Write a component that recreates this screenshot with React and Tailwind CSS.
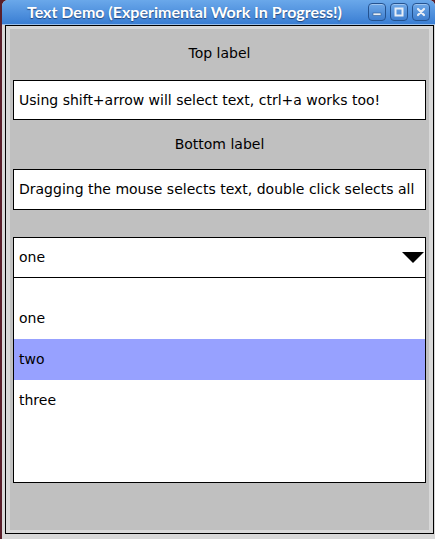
const items = ["one", "two", "three"];

function TitleButton({ kind }) {
  return (
    <div className="grid h-[18px] w-[18px] place-items-center rounded-[4px] border border-[#24528f] bg-gradient-to-b from-[#6ea8e8] to-[#3f7fcf] shadow-[inset_0_1px_0_rgba(255,255,255,.35)]">
      <svg width="12" height="12" viewBox="0 0 12 12">
        {kind === "min" && <rect x="2" y="7" width="8" height="2.5" fill="#e8eef6" stroke="#2b5b95" strokeWidth="0.6" />}
        {kind === "max" && (
          <rect x="2.5" y="2.5" width="7" height="7" fill="none" stroke="#e8eef6" strokeWidth="2" />
        )}
        {kind === "close" && (
          <path d="M3 3 L9 9 M9 3 L3 9" stroke="#e8eef6" strokeWidth="2.2" strokeLinecap="round" />
        )}
      </svg>
    </div>
  );
}

export default function App() {
  return (
    <div className="h-[539px] w-[435px] overflow-hidden bg-[#5a1f2b] pl-[2px] font-['DejaVu_Sans',sans-serif] text-[14px] text-black">
      <div className="flex h-full flex-col overflow-hidden rounded-t-[6px] bg-[#d8d8d8]">
        <div className="flex h-[24px] shrink-0 items-center bg-gradient-to-b from-[#6aa8ea] to-[#3a7ed3] pl-[25px] pr-[5px]">
          <span className="flex-1 font-['Lato',sans-serif] text-[16px] font-bold text-white [text-shadow:0_1px_1px_rgba(20,40,80,.7)]">
            Text Demo (Experimental Work In Progress!)
          </span>
          <div className="flex gap-[4px]">
            <TitleButton kind="min" />
            <TitleButton kind="max" />
            <TitleButton kind="close" />
          </div>
        </div>
        <div className="h-px shrink-0 bg-[#9cc0ea]" />
        <div className="ml-[3px] mr-[1px] flex h-[509px] flex-col border border-black p-[3px] pl-[4px] pr-[4px]">
          <div className="flex flex-1 flex-col bg-[#c0c0c0] px-[3px]">
            <div className="flex h-[48px] items-center justify-center">Top label</div>
            <div className="mt-[3px] flex h-[40px] items-center border border-black bg-white px-[5px]">
              Using shift+arrow will select text, ctrl+a works too!
            </div>
            <div className="flex h-[49px] items-center justify-center">Bottom label</div>
            <div className="flex h-[41px] items-center border border-black bg-white px-[5px]">
              Dragging the mouse selects text, double click selects all
            </div>
            <div className="mt-[27px] flex h-[246px] flex-col border border-black bg-white">
              <div className="flex h-[40px] shrink-0 items-center justify-between border-b border-black pl-[5px] pr-[1px]">
                <span>one</span>
                <svg width="22" height="12" viewBox="0 0 22 12">
                  <path d="M0 0 H22 L11 11 Z" fill="#000" />
                </svg>
              </div>
              <div className="pt-[20px]">
                {items.map((item) => (
                  <div
                    key={item}
                    className={`flex h-[41px] items-center px-[5px] ${item === "two" ? "bg-[#97a1ff]" : ""}`}
                  >
                    {item}
                  </div>
                ))}
              </div>
            </div>
          </div>
        </div>
        <div className="flex-1" />
      </div>
    </div>
  );
}
